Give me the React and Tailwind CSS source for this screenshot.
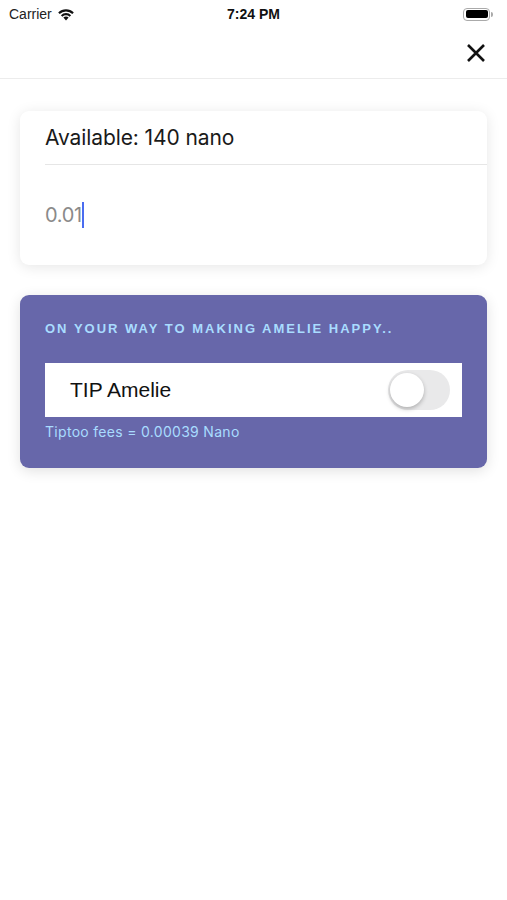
import React from "react";

export default function App() {
  return (
    <div className="w-[507px] h-[900px] bg-white relative overflow-hidden" style={{ fontFamily: "Inter, 'Liberation Sans', sans-serif" }}>
      {/* Status bar */}
      <div className="h-[28px] flex items-center justify-between px-[9px] relative">
        <div className="flex items-center gap-[5px]">
          <span className="text-[14px] text-[#222] leading-none" style={{ fontFamily: "'Liberation Sans', sans-serif" }}>Carrier</span>
          <svg width="18" height="13" viewBox="0 0 18 13">
            <path d="M9 12.5 L6.4 9.6 A3.8 3.8 0 0 1 11.6 9.6 Z" fill="#111" />
            <path d="M3.9 7.2 A7.3 7.3 0 0 1 14.1 7.2 L12.6 8.8 A5.2 5.2 0 0 0 5.4 8.8 Z" fill="#111" />
            <path d="M1.2 4.5 A11 11 0 0 1 16.8 4.5 L15.3 6 A8.9 8.9 0 0 0 2.7 6 Z" fill="#111" />
          </svg>
        </div>
        <span className="absolute left-1/2 -translate-x-1/2 text-[14px] font-bold text-[#111] leading-none" style={{ fontFamily: "'Liberation Sans', sans-serif" }}>7:24 PM</span>
        <div className="flex items-center mr-[5px]">
          <div className="w-[27px] h-[13px] rounded-[4px] border border-[#aaa] p-[1.5px]">
            <div className="w-full h-full rounded-[2px] bg-black" />
          </div>
          <div className="w-[2px] h-[5px] bg-[#aaa] rounded-r-sm ml-[1px]" />
        </div>
      </div>
      {/* Nav bar */}
      <div className="h-[51px] border-b border-[#ececec] flex items-center justify-end pr-[21px]">
        <svg width="20" height="20" viewBox="0 0 20 20">
          <path d="M2 2 L18 18 M18 2 L2 18" stroke="#111" strokeWidth="2.6" strokeLinecap="butt" />
        </svg>
      </div>

      <div className="px-[20px] pt-[32px] flex flex-col gap-[30px]">
        {/* Amount card */}
        <div className="rounded-[9px] bg-white shadow-[0_2px_14px_rgba(0,0,0,0.10)] h-[154px] flex flex-col">
          <div className="h-[54px] ml-[25px] border-b border-[#e6e6e6] flex items-center">
            <span className="text-[21px] text-[#1a1a1a] tracking-[-0.1px]">Available: 140 nano</span>
          </div>
          <div className="flex-1 flex items-center pl-[25px]">
            <span className="text-[20px] text-[#8a8a8a] tracking-[-0.3px]">0.01</span>
            <span className="w-[2.5px] h-[26px] bg-[#4a6cf0]" />
          </div>
        </div>

        {/* Purple card */}
        <div className="rounded-[9px] bg-[#6767aa] shadow-[0_3px_14px_rgba(0,0,0,0.12)] h-[173px] px-[25px] pt-[26px]">
          <div className="text-[13px] font-bold text-[#a9dcff] tracking-[2px] leading-[16px]" style={{ fontFamily: "'Liberation Sans', sans-serif" }}>
            ON YOUR WAY TO MAKING AMELIE HAPPY..
          </div>
          <div className="mt-[26px] h-[54px] bg-white flex items-center justify-between pl-[25px] pr-[12px]">
            <span className="text-[21px] text-[#111]" style={{ fontFamily: "'Liberation Sans', sans-serif" }}>TIP Amelie</span>
            <div className="w-[62px] h-[40px] rounded-full bg-[#e9e9ea] relative">
              <div className="absolute left-[2px] top-[3px] w-[34px] h-[34px] rounded-full bg-white shadow-[0_2px_4px_rgba(0,0,0,0.25)]" />
            </div>
          </div>
          <div className="mt-[6px] text-[14px] text-[#a9dcff] leading-[18px] tracking-[0.3px]">Tiptoo fees = 0.00039 Nano</div>
        </div>
      </div>
    </div>
  );
}
